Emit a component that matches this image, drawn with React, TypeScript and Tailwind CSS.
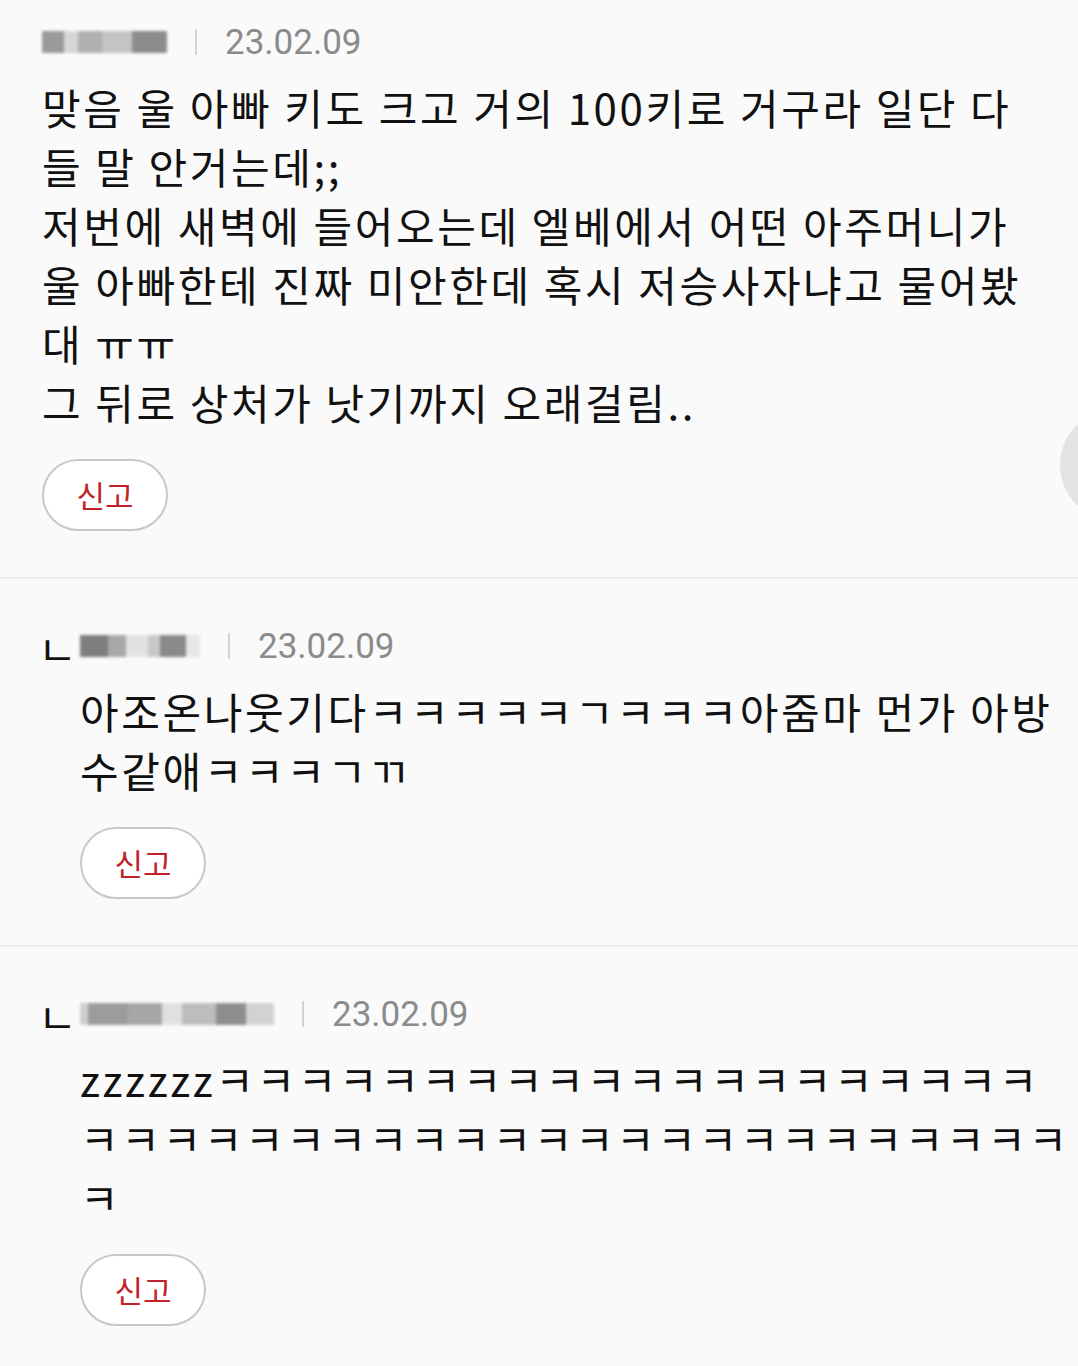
import React from 'react';

type Comment = {
  id: number;
  reply: boolean;
  nameBlocks: { w: number; shade: string }[];
  date: string;
  lines: string[];
};

const comments: Comment[] = [
  {
    id: 1,
    reply: false,
    nameBlocks: [
      { w: 22, shade: 'bg-[#9a9a9a]' },
      { w: 14, shade: 'bg-[#d6d6d6]' },
      { w: 24, shade: 'bg-[#b0b0b0]' },
      { w: 30, shade: 'bg-[#c4c4c4]' },
      { w: 35, shade: 'bg-[#8c8c8c]' },
    ],
    date: '23.02.09',
    lines: [
      '맞음 울 아빠 키도 크고 거의 100키로 거구라 일단 다',
      '들 말 안거는데;;',
      '저번에 새벽에 들어오는데 엘베에서 어떤 아주머니가',
      '울 아빠한테 진짜 미안한데 혹시 저승사자냐고 물어봤',
      '대 ㅠㅠ',
      '그 뒤로 상처가 낫기까지 오래걸림..',
    ],
  },
  {
    id: 2,
    reply: true,
    nameBlocks: [
      { w: 28, shade: 'bg-[#7e7e7e]' },
      { w: 18, shade: 'bg-[#a8a8a8]' },
      { w: 22, shade: 'bg-[#e2e2e2]' },
      { w: 12, shade: 'bg-[#c8c8c8]' },
      { w: 26, shade: 'bg-[#8a8a8a]' },
      { w: 14, shade: 'bg-[#e6e6e6]' },
    ],
    date: '23.02.09',
    lines: ['아조온나웃기다ㅋㅋㅋㅋㅋㄱㅋㅋㅋ아줌마 먼가 아방', '수같애ㅋㅋㅋㄱㄲ'],
  },
  {
    id: 3,
    reply: true,
    nameBlocks: [
      { w: 8, shade: 'bg-[#cfcfcf]' },
      { w: 40, shade: 'bg-[#9c9c9c]' },
      { w: 34, shade: 'bg-[#a6a6a6]' },
      { w: 20, shade: 'bg-[#e0e0e0]' },
      { w: 34, shade: 'bg-[#bdbdbd]' },
      { w: 30, shade: 'bg-[#8e8e8e]' },
      { w: 28, shade: 'bg-[#d2d2d2]' },
    ],
    date: '23.02.09',
    lines: [
      'zzzzzzㅋㅋㅋㅋㅋㅋㅋㅋㅋㅋㅋㅋㅋㅋㅋㅋㅋㅋㅋㅋ',
      'ㅋㅋㅋㅋㅋㅋㅋㅋㅋㅋㅋㅋㅋㅋㅋㅋㅋㅋㅋㅋㅋㅋㅋㅋ',
      'ㅋ',
    ],
  },
];

const font = "font-['Noto_Sans_CJK_KR','Noto_Sans',sans-serif]";

const CommentItem: React.FC<{ c: Comment; first: boolean }> = ({ c, first }) => {
  return (
    <section className={`${first ? 'pt-[20px]' : 'pt-[45px]'} pb-[46px] px-[42px]`}>
      <div className="flex items-center h-[44px]">
        {c.reply && (
          <span className={`${font} text-[42px] leading-none text-[#111] w-[42px] -ml-[4px] mt-[4px]`}>ㄴ</span>
        )}
        <div className="flex items-center h-[30px] blur-[1.5px]">
          {c.nameBlocks.map((b, i) => (
            <div key={i} className={`${b.shade} h-[22px]`} style={{ width: b.w }} />
          ))}
        </div>
        <div className="w-[2px] h-[26px] bg-[#d4d4d4] mx-[28px]" />
        <span className="font-['Roboto',sans-serif] text-[35px] leading-none text-[#8b8b8b]">{c.date}</span>
      </div>

      <div
        className={`${c.reply ? 'pl-[38px]' : ''} mt-[13px] ${font} text-[42px] tracking-[2.6px] leading-[59px] text-[#111] whitespace-nowrap`}
      >
        {c.lines.map((l, i) => (
          <div key={i}>{l}</div>
        ))}
      </div>

      <div className={`${c.reply ? 'pl-[38px]' : ''} mt-[28px]`}>
        <button
          className={`w-[126px] h-[72px] rounded-full border-2 border-[#c8c8c8] bg-white ${font} text-[31px] text-[#c0242a] flex items-center justify-center`}
        >
          신고
        </button>
      </div>
    </section>
  );
};

export default function App() {
  return (
    <div className="relative w-full min-h-screen bg-[#fafafa] overflow-hidden">
      {comments.map((c, i) => (
        <React.Fragment key={c.id}>
          {i > 0 && <div className="h-[2px] bg-[#ebebeb]" />}
          <CommentItem c={c} first={i === 0} />
        </React.Fragment>
      ))}
      <div className="absolute left-[1060px] top-[410px] w-[110px] h-[110px] rounded-full bg-[#e3e3e3]" />
    </div>
  );
}
